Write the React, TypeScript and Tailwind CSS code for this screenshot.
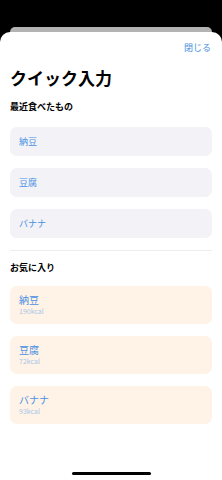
const recent = ['納豆', '豆腐', 'バナナ']
const favorites = [
  { name: '納豆', kcal: '190kcal' },
  { name: '豆腐', kcal: '72kcal' },
  { name: 'バナナ', kcal: '93kcal' },
]

export default function App() {
  return (
    <div
      className="h-[480px] w-[222px] bg-black flex flex-col pt-[27px] overflow-hidden"
      style={{ fontFamily: '"Noto Sans CJK JP", "Noto Sans", sans-serif' }}
    >
      <div className="mx-[10px] h-[5px] rounded-t-[8px] bg-[#b3b3b3]" />
      <div className="flex-1 flex flex-col rounded-t-[10px] bg-white px-[10px]">
        <div className="pt-[10px] text-right pr-[1px] text-[9px] leading-[12px] text-[#4a90e2]">閉じる</div>
        <h1 className="mt-[13px] text-[17px] leading-[22px] font-bold text-black">クイック入力</h1>
        <div className="mt-[12px] text-[9px] leading-[12px] font-bold text-black">最近食べたもの</div>
        <div className="mt-[14px] flex flex-col gap-[12px]">
          {recent.map((r) => (
            <div key={r} className="h-[29px] rounded-[7px] bg-[#f2f2f7] px-[9px] flex items-center text-[9px] text-[#4a90e2]">
              {r}
            </div>
          ))}
        </div>
        <div className="mt-[12px] h-px bg-[#ededed]" />
        <div className="mt-[11px] text-[9px] leading-[12px] font-bold text-black">お気に入り</div>
        <div className="mt-[12px] flex flex-col gap-[12px]">
          {favorites.map((f) => (
            <div key={f.name} className="h-[38px] rounded-[7px] bg-[#fef3e6] px-[9px] flex flex-col justify-center">
              <div className="text-[10px] leading-[12px] text-[#4a90e2]">{f.name}</div>
              <div className="text-[7px] leading-[9px] mt-[1px] text-[#a9c6ea]">{f.kcal}</div>
            </div>
          ))}
        </div>
        <div className="mt-auto mb-[5px] mx-auto h-[3px] w-[79px] rounded-full bg-black" />
      </div>
    </div>
  )
}
